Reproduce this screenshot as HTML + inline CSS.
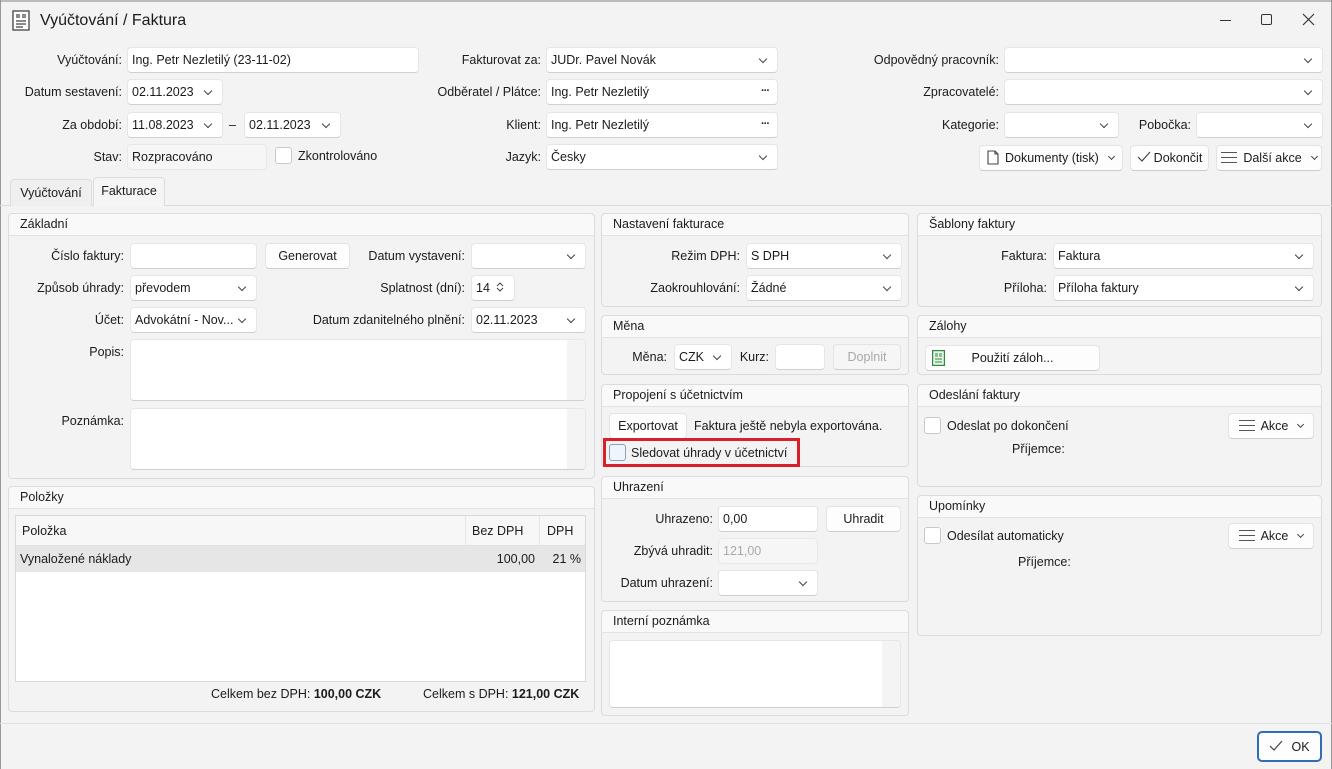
<!DOCTYPE html>
<html><head><meta charset="utf-8">
<style>
*{box-sizing:border-box;margin:0;padding:0}
body{width:1332px;height:769px;overflow:hidden;background:#f3f3f3;font-family:"Liberation Sans",sans-serif;font-size:12.5px;color:#1b1b1b;position:relative}
.a{position:absolute}
.lb{position:absolute;text-align:right;white-space:nowrap;line-height:26px;height:26px}
.in{position:absolute;background:#fff;border:1px solid #e6e6e6;border-bottom-color:#cfcfcf;border-radius:4px;height:26px;line-height:24px;padding-left:4px;white-space:nowrap;overflow:hidden}
.gr{background:#f6f6f6;border-color:#e8e8e8}
.dd::after{content:"";position:absolute;right:11px;top:8px;width:5px;height:5px;border-right:1.1px solid #444;border-bottom:1.1px solid #444;transform:rotate(45deg)}
.btn{position:absolute;background:#fdfdfd;border:1px solid #e3e3e3;border-bottom-color:#cdcdcd;border-radius:4px;height:26px;line-height:24px;text-align:center;white-space:nowrap}
.pn{position:absolute;border:1px solid #dcdcdc;border-radius:4px;background:#f3f3f3}
.ph{height:22px;line-height:21px;padding-left:11px;background:#f9f9f9;border-bottom:1px solid #e2e2e2;border-radius:4px 4px 0 0}
.cb{position:absolute;width:17px;height:17px;border:1px solid #c9c9c9;border-radius:3px;background:#fff}
.txt{position:absolute;white-space:nowrap;line-height:26px}
.ham{display:inline-block;width:16px;height:11px;border-top:1.2px solid #555;border-bottom:1.2px solid #555;position:relative;vertical-align:-1px;margin-right:6px}
.ham::after{content:"";position:absolute;left:0;right:0;top:4px;border-top:1.2px solid #555}
.ch{display:inline-block;width:5px;height:5px;border-right:1.1px solid #444;border-bottom:1.1px solid #444;transform:rotate(45deg);margin-left:10px;vertical-align:3px}
.dots{position:absolute;right:8px;top:0;line-height:22px;font-weight:bold;letter-spacing:-1px;font-size:11px}
</style></head><body>
<div class="a" style="left:0;top:0;width:1332px;height:2px;background:#bbb"></div>
<div class="a" style="left:0;top:0;width:1px;height:769px;background:#999"></div>
<div class="a" style="right:0;top:0;width:1px;height:769px;background:#999"></div>
<svg class="a" style="left:12px;top:10px" width="18" height="21" viewBox="0 0 18 21"><rect x="1" y="1" width="16" height="19" fill="#fff" stroke="#444" stroke-width="1.3"/><path d="M4 5h4M4 7h4M10 5h4M10 7h4M4 11h10M4 14h10M4 17h7" stroke="#444" stroke-width="1.2"/></svg>
<div class="a" style="left:40px;top:10px;font-size:16px;line-height:22px">Vyúčtování / Faktura</div>
<div class="a" style="left:1220px;top:20px;width:11px;border-top:1.2px solid #333"></div>
<div class="a" style="left:1261px;top:14px;width:11px;height:11px;border:1.2px solid #333;border-radius:2px"></div>
<svg class="a" style="left:1302px;top:13px" width="13" height="13"><path d="M1 1L12 12M12 1L1 12" stroke="#333" stroke-width="1.2"/></svg>

<div class="lb" style="left:0;width:122px;top:47px">Vyúčtování:</div>
<div class="in" style="left:127px;top:47px;width:292px">Ing. Petr Nezletilý (23-11-02)</div>
<div class="lb" style="left:0;width:122px;top:79px">Datum sestavení:</div>
<div class="in dd" style="left:127px;top:79px;width:96px">02.11.2023</div>
<div class="lb" style="left:0;width:122px;top:112px">Za období:</div>
<div class="in dd" style="left:127px;top:112px;width:96px">11.08.2023</div>
<div class="txt" style="left:229px;top:112px">–</div>
<div class="in dd" style="left:244px;top:112px;width:97px">02.11.2023</div>
<div class="lb" style="left:0;width:122px;top:144px">Stav:</div>
<div class="in gr" style="left:127px;top:144px;width:140px">Rozpracováno</div>
<div class="cb" style="left:275px;top:147px"></div>
<div class="txt" style="left:298px;top:143px">Zkontrolováno</div>

<div class="lb" style="left:400px;width:141px;top:47px">Fakturovat za:</div>
<div class="in dd" style="left:546px;top:47px;width:232px">JUDr. Pavel Novák</div>
<div class="lb" style="left:400px;width:141px;top:79px">Odběratel / Plátce:</div>
<div class="in" style="left:546px;top:79px;width:232px">Ing. Petr Nezletilý<span class="dots">···</span></div>
<div class="lb" style="left:400px;width:141px;top:112px">Klient:</div>
<div class="in" style="left:546px;top:112px;width:232px">Ing. Petr Nezletilý<span class="dots">···</span></div>
<div class="lb" style="left:400px;width:141px;top:144px">Jazyk:</div>
<div class="in dd" style="left:546px;top:144px;width:232px">Česky</div>

<div class="lb" style="left:800px;width:199px;top:47px">Odpovědný pracovník:</div>
<div class="in dd" style="left:1004px;top:47px;width:319px"></div>
<div class="lb" style="left:800px;width:199px;top:79px">Zpracovatelé:</div>
<div class="in dd" style="left:1004px;top:79px;width:319px"></div>
<div class="lb" style="left:800px;width:199px;top:112px">Kategorie:</div>
<div class="in dd" style="left:1004px;top:112px;width:115px"></div>
<div class="lb" style="left:1100px;width:91px;top:112px">Pobočka:</div>
<div class="in dd" style="left:1196px;top:112px;width:127px"></div>

<div class="btn" style="left:979px;top:145px;width:144px;text-align:left;padding-left:7px"><svg width="12" height="15" style="vertical-align:-3px;margin-right:6px"><path d="M1 1h7l3 3v10H1z M8 1v3h3" fill="none" stroke="#444" stroke-width="1.1"/></svg>Dokumenty (tisk)<span class="ch"></span></div>
<div class="btn" style="left:1130px;top:145px;width:79px"><svg width="14" height="11" style="margin-right:3px"><path d="M1 6l4 4 8-9" fill="none" stroke="#444" stroke-width="1.2"/></svg>Dokončit</div>
<div class="btn" style="left:1216px;top:145px;width:106px"><span class="ham"></span>Další akce<span class="ch"></span></div>

<div class="a" style="left:0;top:205px;width:1332px;border-top:1px solid #dcdcdc"></div>
<div class="a" style="left:10px;top:179px;width:82px;height:27px;border:1px solid #ddd;border-bottom:none;border-radius:4px 4px 0 0;background:#efefef;text-align:center;line-height:26px">Vyúčtování</div>
<div class="a" style="left:93px;top:177px;width:72px;height:29px;border:1px solid #ddd;border-bottom:none;border-radius:4px 4px 0 0;background:#f5f5f5;text-align:center;line-height:27px">Fakturace</div>

<div class="pn" style="left:8px;top:213px;width:587px;height:266px"><div class="ph">Základní</div></div>
<div class="lb" style="left:0;width:124px;top:243px">Číslo faktury:</div>
<div class="in" style="left:130px;top:243px;width:127px"></div>
<div class="btn" style="left:265px;top:243px;width:85px">Generovat</div>
<div class="lb" style="left:300px;width:165px;top:243px">Datum vystavení:</div>
<div class="in dd" style="left:471px;top:243px;width:115px"></div>
<div class="lb" style="left:0;width:124px;top:275px">Způsob úhrady:</div>
<div class="in dd" style="left:130px;top:275px;width:127px">převodem</div>
<div class="lb" style="left:300px;width:165px;top:275px">Splatnost (dní):</div>
<div class="in" style="left:471px;top:275px;width:44px">14 <svg width="10" height="12" style="vertical-align:-1px;margin-left:2px"><path d="M2 5l3-3 3 3M2 7l3 3 3-3" fill="none" stroke="#444" stroke-width="1"/></svg></div>
<div class="lb" style="left:0;width:124px;top:307px">Účet:</div>
<div class="in dd" style="left:130px;top:307px;width:127px">Advokátní - Nov...</div>
<div class="lb" style="left:290px;width:175px;top:307px">Datum zdanitelného plnění:</div>
<div class="in dd" style="left:471px;top:307px;width:115px">02.11.2023</div>
<div class="lb" style="left:0;width:124px;top:339px">Popis:</div>
<div class="in" style="left:130px;top:339px;width:456px;height:62px"><div class="a" style="right:0;top:0;width:18px;height:60px;background:#f4f4f4"></div></div>
<div class="lb" style="left:0;width:124px;top:408px">Poznámka:</div>
<div class="in" style="left:130px;top:408px;width:456px;height:62px"><div class="a" style="right:0;top:0;width:18px;height:60px;background:#f4f4f4"></div></div>

<div class="pn" style="left:8px;top:486px;width:587px;height:226px"><div class="ph">Položky</div></div>
<div class="a" style="left:15px;top:515px;width:571px;height:167px;background:#fff;border:1px solid #d9d9d9">
 <div class="a" style="left:0;top:0;width:569px;height:30px;background:#f7f7f7;border-bottom:1px solid #e0e0e0"></div>
 <div class="a" style="left:449px;top:0;height:30px;border-left:1px solid #e6e6e6"></div>
 <div class="a" style="left:523px;top:0;height:30px;border-left:1px solid #e6e6e6"></div>
 <div class="txt" style="left:6px;top:2px">Položka</div>
 <div class="txt" style="left:456px;top:2px">Bez DPH</div>
 <div class="txt" style="left:531px;top:2px">DPH</div>
 <div class="a" style="left:0;top:30px;width:569px;height:26px;background:#e6e6e6"></div>
 <div class="txt" style="left:4px;top:30px">Vynaložené náklady</div>
 <div class="txt" style="right:50px;top:30px">100,00</div>
 <div class="txt" style="right:4px;top:30px">21 %</div>
</div>
<div class="txt" style="left:211px;top:681px">Celkem bez DPH: <b>100,00 CZK</b></div>
<div class="txt" style="left:423px;top:681px">Celkem s DPH: <b>121,00 CZK</b></div>

<div class="pn" style="left:601px;top:213px;width:308px;height:94px"><div class="ph">Nastavení fakturace</div></div>
<div class="lb" style="left:600px;width:140px;top:243px">Režim DPH:</div>
<div class="in dd" style="left:746px;top:243px;width:156px">S DPH</div>
<div class="lb" style="left:600px;width:140px;top:275px">Zaokrouhlování:</div>
<div class="in dd" style="left:746px;top:275px;width:156px">Žádné</div>

<div class="pn" style="left:601px;top:315px;width:308px;height:60px"><div class="ph">Měna</div></div>
<div class="lb" style="left:600px;width:67px;top:344px">Měna:</div>
<div class="in dd" style="left:674px;top:344px;width:58px">CZK</div>
<div class="lb" style="left:700px;width:69px;top:344px">Kurz:</div>
<div class="in" style="left:775px;top:344px;width:50px"></div>
<div class="btn" style="left:833px;top:344px;width:68px;color:#a8a8a8;background:#f6f6f6">Doplnit</div>

<div class="pn" style="left:601px;top:384px;width:308px;height:83px"><div class="ph">Propojení s účetnictvím</div></div>
<div class="btn" style="left:609px;top:413px;width:78px">Exportovat</div>
<div class="txt" style="left:694px;top:413px">Faktura ještě nebyla exportována.</div>
<div class="a" style="left:603px;top:438px;width:197px;height:29px;border:3px solid #d7202a"></div>
<div class="cb" style="left:609px;top:444px;background:#eef5fb;border-color:#8aa3b8"></div>
<div class="txt" style="left:631px;top:440px">Sledovat úhrady v účetnictví</div>

<div class="pn" style="left:601px;top:476px;width:308px;height:126px"><div class="ph">Uhrazení</div></div>
<div class="lb" style="left:600px;width:113px;top:506px">Uhrazeno:</div>
<div class="in" style="left:718px;top:506px;width:100px">0,00</div>
<div class="btn" style="left:826px;top:506px;width:75px">Uhradit</div>
<div class="lb" style="left:600px;width:113px;top:538px">Zbývá uhradit:</div>
<div class="in gr" style="left:718px;top:538px;width:100px;color:#aaa">121,00</div>
<div class="lb" style="left:600px;width:113px;top:570px">Datum uhrazení:</div>
<div class="in dd" style="left:718px;top:570px;width:100px"></div>

<div class="pn" style="left:601px;top:610px;width:308px;height:106px"><div class="ph">Interní poznámka</div></div>
<div class="in" style="left:609px;top:640px;width:292px;height:68px"><div class="a" style="right:0;top:0;width:18px;height:66px;background:#f4f4f4"></div></div>

<div class="pn" style="left:917px;top:213px;width:405px;height:94px"><div class="ph">Šablony faktury</div></div>
<div class="lb" style="left:950px;width:97px;top:243px">Faktura:</div>
<div class="in dd" style="left:1053px;top:243px;width:261px">Faktura</div>
<div class="lb" style="left:950px;width:97px;top:275px">Příloha:</div>
<div class="in dd" style="left:1053px;top:275px;width:261px">Příloha faktury</div>

<div class="pn" style="left:917px;top:315px;width:405px;height:60px"><div class="ph">Zálohy</div></div>
<div class="btn" style="left:925px;top:345px;width:175px"><svg class="a" style="left:6px;top:4px" width="13" height="16"><rect x="0.6" y="0.6" width="11.8" height="14.8" fill="#e8f5e9" stroke="#2e8b3c" stroke-width="1.2"/><path d="M3 4h3M3 6h3M7 4h3M7 6h3M3 9h7M3 12h7" stroke="#2e8b3c" stroke-width="1"/></svg>Použití záloh...</div>

<div class="pn" style="left:917px;top:384px;width:405px;height:103px"><div class="ph">Odeslání faktury</div></div>
<div class="cb" style="left:924px;top:417px"></div>
<div class="txt" style="left:947px;top:413px">Odeslat po dokončení</div>
<div class="btn" style="left:1228px;top:413px;width:86px"><span class="ham"></span>Akce<span class="ch"></span></div>
<div class="txt" style="left:1012px;top:436px">Příjemce:</div>

<div class="pn" style="left:917px;top:495px;width:405px;height:141px"><div class="ph">Upomínky</div></div>
<div class="cb" style="left:924px;top:527px"></div>
<div class="txt" style="left:947px;top:523px">Odesílat automaticky</div>
<div class="btn" style="left:1228px;top:523px;width:86px"><span class="ham"></span>Akce<span class="ch"></span></div>
<div class="txt" style="left:1018px;top:549px">Příjemce:</div>

<div class="a" style="left:0;top:723px;width:1332px;border-top:1px solid #e0e0e0"></div>
<div class="btn" style="left:1257px;top:731px;width:65px;height:31px;line-height:28px;border:2px solid #2f6db5;border-radius:5px"><svg width="14" height="11" style="margin-right:8px"><path d="M1 6l4 4 8-9" fill="none" stroke="#444" stroke-width="1.2"/></svg>OK</div>
</body></html>
